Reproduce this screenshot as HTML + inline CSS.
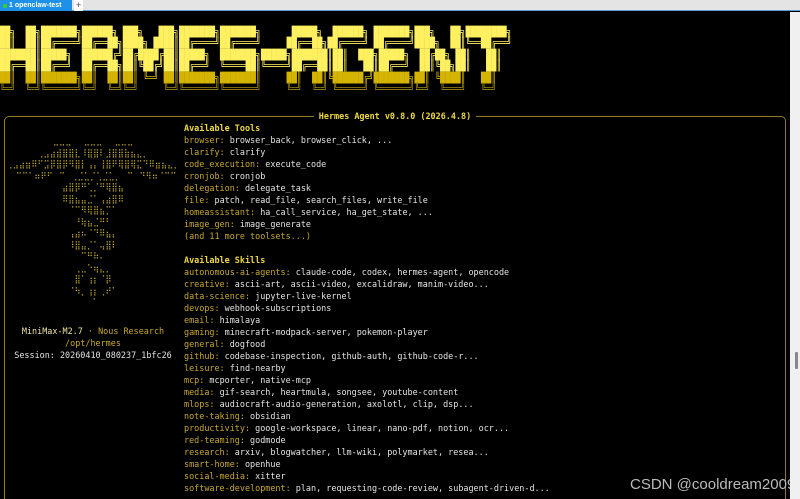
<!DOCTYPE html>
<html><head><meta charset="utf-8"><style>
*{margin:0;padding:0;box-sizing:border-box}
html,body{width:800px;height:499px;overflow:hidden}
body{background:#000;position:relative;font-family:"DejaVu Sans Mono","Liberation Mono",monospace}
#bar{position:absolute;left:0;top:0;width:800px;height:11px;background:#e4e4e4;border-bottom:1px solid #5a9bd5}
#tab{position:absolute;left:0;top:0;width:72px;height:11px;background:#1e90e8;color:#fff;font:bold 7px "Liberation Sans",sans-serif;line-height:11px;padding-left:9px}
#tab:before{content:"";position:absolute;left:3px;top:4px;width:4px;height:4px;background:#3c3;border-radius:1px}
#plus{position:absolute;left:74px;top:0;width:9px;height:11px;background:#fff;font:9px "Liberation Sans",sans-serif;line-height:11px;text-align:center;color:#444}
#sb{position:absolute;left:790px;top:12px;width:10px;height:487px;background:#f0f0f0}
#thumb{position:absolute;left:795px;top:352px;width:3px;height:17px;background:#888;border-radius:1px}
#banner{position:absolute;left:0;top:27px;font-family:"DejaVu Sans Mono",monospace;font-size:10px;line-height:11.4px;white-space:pre;transform-origin:0 0;transform:scaleX(0.85)}
#banner div:nth-child(-n+4){color:#fff060}
#banner div:nth-child(5){color:#d4b400}
#banner div:nth-child(6){color:#a08a10}
#box{position:absolute;left:4px;top:116px;width:782px;height:400px;border:1px solid #8a7a20;border-radius:5px}
#title{position:absolute;left:0;width:790px;top:110px;text-align:center;font-size:8.45px;line-height:12px;font-weight:bold;color:#f0d840}
#title span{background:#000;padding:0 5px}
.t{position:absolute;left:184px;top:122px;font-size:8.45px;line-height:12px;white-space:pre;color:#e4e4e4}
.k{color:#c8a830}.h{color:#f0d840;font-weight:bold}
#art{position:absolute;left:0;width:186px;top:136px;text-align:center;font-size:8.45px;line-height:11.5px;white-space:pre;color:#c8b030}
#info{position:absolute;left:0;width:186px;top:325px;text-align:center;font-size:8.45px;line-height:12px;white-space:pre}
#wm{position:absolute;left:630px;top:476px;font:15px "Liberation Sans",sans-serif;color:#bbb;white-space:nowrap}
</style></head><body>
<div id="bar"></div><div id="tab">1 openclaw-test</div><div id="plus">+</div>
<div id="banner"><div>██╗  ██╗███████╗██████╗ ███╗   ███╗███████╗███████╗      █████╗  ██████╗ ███████╗███╗   ██╗████████╗</div><div>██║  ██║██╔════╝██╔══██╗████╗ ████║██╔════╝██╔════╝     ██╔══██╗██╔════╝ ██╔════╝████╗  ██║╚══██╔══╝</div><div>███████║█████╗  ██████╔╝██╔████╔██║█████╗  ███████╗█████╗███████║██║  ███╗█████╗  ██╔██╗ ██║   ██║</div><div>██╔══██║██╔══╝  ██╔══██╗██║╚██╔╝██║██╔══╝  ╚════██║╚════╝██╔══██║██║   ██║██╔══╝  ██║╚██╗██║   ██║</div><div>██║  ██║███████╗██║  ██║██║ ╚═╝ ██║███████╗███████║     ██║  ██║╚██████╔╝███████╗██║ ╚████║   ██║</div><div>╚═╝  ╚═╝╚══════╝╚═╝  ╚═╝╚═╝     ╚═╝╚══════╝╚══════╝     ╚═╝  ╚═╝ ╚═════╝ ╚══════╝╚═╝  ╚═══╝   ╚═╝</div></div>
<div id="box"></div>
<div id="title"><span>Hermes Agent v0.8.0 (2026.4.8)</span></div>
<div id="art">⣀⣀⣀⠀⠀⣀⣀⣀⠀⠀⣀⣀⣀
⢀⣠⣴⣾⣿⣿⣇⠸⣿⣿⠇⣸⣿⣿⣷⣦⣄⡀
⢀⣠⣴⣶⠿⠋⣩⡿⣿⡿⠻⣿⡇⢠⡄⢸⣿⠟⢿⣿⢿⣍⠙⠿⣶⣦⣄⡀
⠀⠉⠉⠁⠶⠟⠋⠀⠉⠀⢀⣈⣁⡈⢁⣈⣁⡀⠀⠉⠀⠙⠻⠶⠈⠉⠉
⣴⣿⡿⠛⢁⡈⠛⢿⣿⣦
⠿⣿⣦⣤⣈⠁⢠⣴⣿⠿
⠈⠉⠻⢿⣿⣦⡉⠁
⠘⢷⣦⣈⠛⠃
⢠⣴⠦⠈⠙⠿⣦⡄
⠸⣿⣤⡈⠁⢤⣿⠇
⠉⠛⠷⠄
⢀⣀⠑⢶⣄⡀
⣿⠁⢰⡆⠈⡿
⠈⠳⡀⢰⡆⢀⠞⠁
⠈</div>
<div id="info"><span style="color:#ece4a0">MiniMax-M2.7</span><span class="k"> · Nous Research</span>
<span class="k">/opt/hermes</span>
<span style="color:#e4e4e4">Session: 20260410_080237_1bfc26</span></div>
<div class="t"><span class="h">Available Tools</span>
<span class="k">browser:</span> browser_back, browser_click, ...
<span class="k">clarify:</span> clarify
<span class="k">code_execution:</span> execute_code
<span class="k">cronjob:</span> cronjob
<span class="k">delegation:</span> delegate_task
<span class="k">file:</span> patch, read_file, search_files, write_file
<span class="k">homeassistant:</span> ha_call_service, ha_get_state, ...
<span class="k">image_gen:</span> image_generate
<span class="k">(and 11 more toolsets...)</span>

<span class="h">Available Skills</span>
<span class="k">autonomous-ai-agents:</span> claude-code, codex, hermes-agent, opencode
<span class="k">creative:</span> ascii-art, ascii-video, excalidraw, manim-video...
<span class="k">data-science:</span> jupyter-live-kernel
<span class="k">devops:</span> webhook-subscriptions
<span class="k">email:</span> himalaya
<span class="k">gaming:</span> minecraft-modpack-server, pokemon-player
<span class="k">general:</span> dogfood
<span class="k">github:</span> codebase-inspection, github-auth, github-code-r...
<span class="k">leisure:</span> find-nearby
<span class="k">mcp:</span> mcporter, native-mcp
<span class="k">media:</span> gif-search, heartmula, songsee, youtube-content
<span class="k">mlops:</span> audiocraft-audio-generation, axolotl, clip, dsp...
<span class="k">note-taking:</span> obsidian
<span class="k">productivity:</span> google-workspace, linear, nano-pdf, notion, ocr...
<span class="k">red-teaming:</span> godmode
<span class="k">research:</span> arxiv, blogwatcher, llm-wiki, polymarket, resea...
<span class="k">smart-home:</span> openhue
<span class="k">social-media:</span> xitter
<span class="k">software-development:</span> plan, requesting-code-review, subagent-driven-d...</div>
<div id="wm">CSDN @cooldream2009</div>
<div id="sb"></div><div id="thumb"></div>
</body></html>
